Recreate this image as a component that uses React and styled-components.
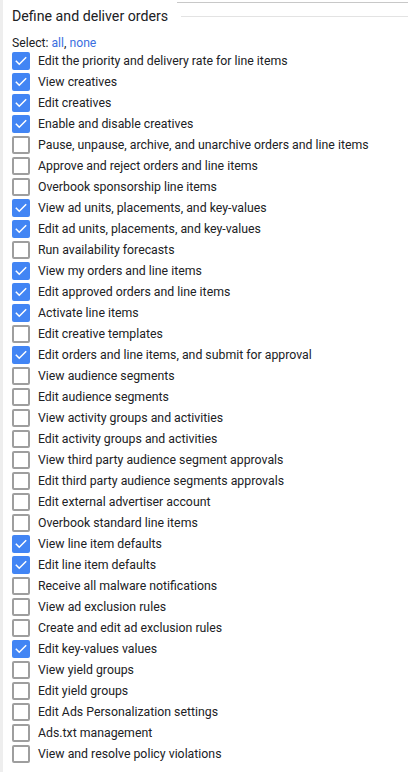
import React from "react";
import styled, { createGlobalStyle } from "styled-components";

const Global = createGlobalStyle`
  html, body { margin: 0; padding: 0; background: #fff; }
  body { font-family: Roboto, "Liberation Sans", Arial, sans-serif; color: #202124; }
`;

const Page = styled.div`
  width: 408px;
  height: 772px;
  box-sizing: border-box;
  border-left: 3px solid #eeeeee;
  overflow: hidden;
  display: flex;
  flex-direction: column;
`;

const TopRule = styled.div`
  margin: 2px 0 0 174px;
  border-top: 1px solid #c8c8c8;
`;

const Header = styled.div`
  display: flex;
  align-items: center;
  gap: 13px;
  padding: 0 0 0 9px;
  height: 26px;
`;

const Title = styled.h2`
  margin: 0;
  font-size: 14.2px;
  font-weight: 400;
  color: #202124;
  white-space: nowrap;
`;

const Rule = styled.div`
  flex: 1;
  border-top: 1px solid #e3e3e3;
  margin-top: 1px;
`;

const SelectRow = styled.div`
  padding-left: 9px;
  margin-top: 8px;
  font-size: 12.2px;
  line-height: 13px;
  color: #202124;
`;

const Link = styled.a`
  color: #3b6fe0;
  text-decoration: none;
`;

const List = styled.ul`
  list-style: none;
  margin: 0;
  padding: 0 0 0 9px;
  display: flex;
  flex-direction: column;
`;

const Item = styled.li`
  display: flex;
  align-items: center;
  height: 21px;
  gap: 8px;
  font-size: 12.3px;
  color: #202124;
  white-space: nowrap;
`;

const Box = styled.span`
  width: 18px;
  height: 18px;
  box-sizing: border-box;
  border-radius: 2px;
  flex: none;
  display: flex;
  align-items: center;
  justify-content: center;
  background: ${(p) => (p.$checked ? "#4285f4" : "#fff")};
  border: ${(p) => (p.$checked ? "none" : "2px solid #9e9e9e")};
`;

const items = [
  ["Edit the priority and delivery rate for line items", true],
  ["View creatives", true],
  ["Edit creatives", true],
  ["Enable and disable creatives", true],
  ["Pause, unpause, archive, and unarchive orders and line items", false],
  ["Approve and reject orders and line items", false],
  ["Overbook sponsorship line items", false],
  ["View ad units, placements, and key-values", true],
  ["Edit ad units, placements, and key-values", true],
  ["Run availability forecasts", false],
  ["View my orders and line items", true],
  ["Edit approved orders and line items", true],
  ["Activate line items", true],
  ["Edit creative templates", false],
  ["Edit orders and line items, and submit for approval", true],
  ["View audience segments", false],
  ["Edit audience segments", false],
  ["View activity groups and activities", false],
  ["Edit activity groups and activities", false],
  ["View third party audience segment approvals", false],
  ["Edit third party audience segments approvals", false],
  ["Edit external advertiser account", false],
  ["Overbook standard line items", false],
  ["View line item defaults", true],
  ["Edit line item defaults", true],
  ["Receive all malware notifications", false],
  ["View ad exclusion rules", false],
  ["Create and edit ad exclusion rules", false],
  ["Edit key-values values", true],
  ["View yield groups", false],
  ["Edit yield groups", false],
  ["Edit Ads Personalization settings", false],
  ["Ads.txt management", false],
  ["View and resolve policy violations", false],
];

const Check = () => (
  <svg width="14" height="14" viewBox="0 0 24 24">
    <path d="M4 12.5l5 5L20 6.5" fill="none" stroke="#fff" strokeWidth="2.6" strokeLinecap="square" />
  </svg>
);

export default function App() {
  return (
    <>
      <Global />
      <Page>
        <TopRule />
        <Header>
          <Title>Define and deliver orders</Title>
          <Rule />
        </Header>
        <SelectRow>
          Select: <Link href="#">all</Link>, <Link href="#">none</Link>
        </SelectRow>
        <List>
          {items.map(([label, checked]) => (
            <Item key={label}>
              <Box $checked={checked}>{checked && <Check />}</Box>
              {label}
            </Item>
          ))}
        </List>
      </Page>
    </>
  );
}
